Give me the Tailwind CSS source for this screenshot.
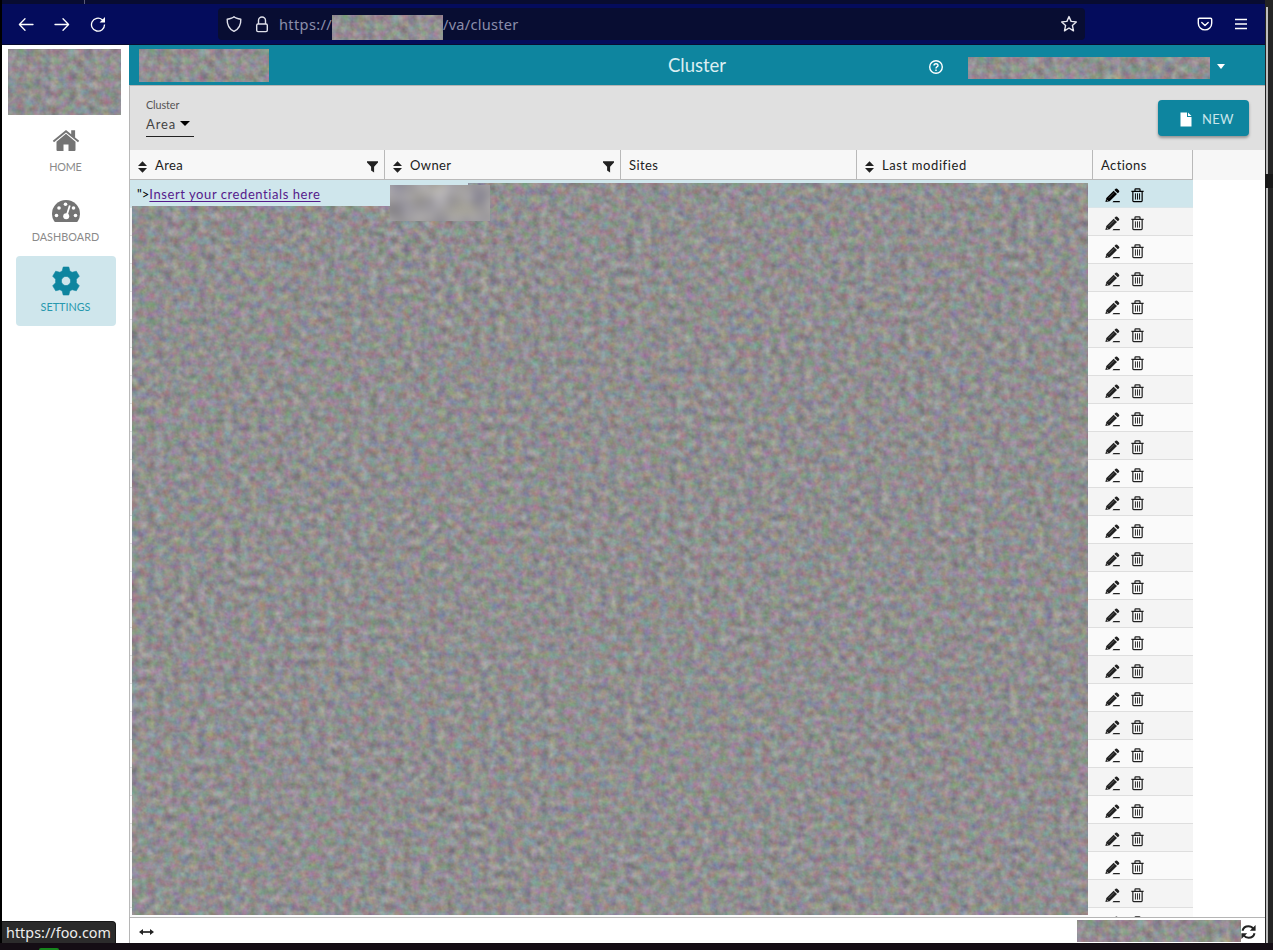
<!DOCTYPE html>
<html lang="en">
<head>
<meta charset="utf-8">
<title>Cluster</title>
<script src="https://cdn.jsdelivr.net/npm/@tailwindcss/browser@4"></script>
</head>
<body class="h-[950px] w-[1273px] overflow-hidden bg-[#140d14] font-['Lato','Noto_Sans',sans-serif] text-[#212121]">
<svg class="hidden">
  <symbol id="pencil" viewBox="0 0 16 16"><path fill="currentColor" d="M.4 15 1.4 10.6 9.2 2.8 12.8 6.4 5 14.2ZM10 2 11.3.8Q12.2 0 13 .8L14.9 2.7Q15.7 3.6 14.9 4.4L13.6 5.6ZM9 13.9H15.8V15.1H8Z"/><path d="M3.7 10.9 9.8 4.8" stroke="#fff" stroke-opacity=".4" stroke-width=".7"/><path d="M1.8 12.5 2.9 13.6" stroke="#fff" stroke-width=".7"/></symbol>
  <symbol id="trash" viewBox="0 0 14 16"><path fill="none" stroke="currentColor" stroke-width="1.3" d="M.4 3.5H13.6M4.3 3.3V1.6Q4.3.9 5 .9H9Q9.7.9 9.7 1.6V3.3M2 3.5V13.7Q2 14.6 2.9 14.6H11.1Q12 14.6 12 13.7V3.5"/><path stroke="currentColor" stroke-width="1" d="M4.8 5.7V12.4M7 5.7V12.4M9.2 5.7V12.4"/></symbol>
  <symbol id="sort" viewBox="0 0 10 12"><path fill="currentColor" d="M5.5.3 10 5H1ZM5.5 11.7 1 7H10Z"/></symbol>
  <symbol id="funnel" viewBox="0 0 12 12"><path fill="currentColor" d="M0 .3H11V1.4L7.1 5.8V11.6L4.1 9.4V5.8L0 1.4Z"/></symbol>
  <filter id="noise" x="0" y="0" width="100%" height="100%" color-interpolation-filters="sRGB">
    <feTurbulence type="fractalNoise" baseFrequency="0.117 0.123" numOctaves="3" seed="23"/>
    <feColorMatrix values=".30 .04 .04 0 .375  .04 .30 .04 0 .37  .04 .04 .30 0 .375  0 0 0 0 1"/>
  </filter>
  <filter id="haze" x="0" y="0" width="100%" height="100%" color-interpolation-filters="sRGB">
    <feTurbulence type="fractalNoise" baseFrequency="0.05" numOctaves="1" seed="4"/>
    <feColorMatrix values=".25 .1 0 0 .45  .25 .1 0 0 .44  .25 0 .1 0 .45  0 0 0 0 1"/>
  </filter>
</svg>

<div class="relative flex h-[943px]">
  <div class="w-[2px] shrink-0 bg-black"></div>
  <div class="flex w-[1263px] flex-col bg-white">
    <!-- Browser toolbar -->
    <div class="h-1 shrink-0 bg-[#080c30]"><div class="ml-[82px] h-1 w-px bg-[#5a5c78]"></div></div>
    <div class="flex h-[41px] shrink-0 items-center border-b border-[#080c30] bg-[#040c5c]">
      <svg class="ml-4 h-4 w-4" viewBox="0 0 16 16" fill="none" stroke="#fff" stroke-width="1.3" stroke-linecap="round" stroke-linejoin="round"><path d="M15 8.5H1.5M7 2.8 1.4 8.5 7 14.2"/></svg>
      <svg class="ml-5 h-4 w-4" viewBox="0 0 16 16" fill="none" stroke="#fff" stroke-width="1.3" stroke-linecap="round" stroke-linejoin="round"><path d="M1 8.5H14.5M9 2.8 14.6 8.5 9 14.2"/></svg>
      <svg class="ml-5 h-4 w-4" viewBox="0 0 16 16" fill="none" stroke="#fff" stroke-width="1.3"><path d="M14.5 8.5A6.5 6.5 0 1 1 12.2 3.7L13 4.5"/><path fill="#fff" stroke="none" d="M15 1V6.4H9.6Z"/></svg>
      <div class="ml-[112px] flex h-8 w-[867px] items-center rounded bg-[#080d32]">
        <svg class="ml-[7px] h-[18px] w-[18px]" viewBox="0 0 18 18" fill="none" stroke="#dfe0ea" stroke-width="1.4" stroke-linejoin="round"><path d="M9 1.7Q10.6 3.3 15.8 4.2 16.2 12.8 9 16.4 1.8 12.8 2.2 4.2 7.4 3.3 9 1.7Z"/></svg>
        <svg class="ml-[12px] h-[17px] w-[14px]" viewBox="0 0 14 17" fill="none" stroke="#dfe0ea" stroke-width="1.4"><rect x="1.7" y="8" width="10.6" height="7.6" rx="1.3"/><path d="M3.5 8V4.5A3.5 3.5 0 0 1 10.5 4.5V8"/></svg>
        <span class="mt-[2px] ml-[10px] w-[53px] whitespace-nowrap font-['Noto_Sans',sans-serif] text-[14.6px] tracking-[0.35px] text-[#8b8daa]">https://</span>
        <svg class="mt-[7px] h-[25px] w-[111px]"><rect width="111" height="25" filter="url(#noise)"/></svg>
        <span class="mt-[2px] font-['Noto_Sans',sans-serif] text-[14.6px] tracking-[0.25px] text-[#8b8daa]">/va/cluster</span>
        <svg class="ml-auto mr-[7px] h-[18px] w-[18px]" viewBox="0 0 18 18" fill="none" stroke="#e8e8f0" stroke-width="1.4" stroke-linejoin="round"><path d="M9 1.6 11.1 6.4 16.3 6.9 12.4 10.4 13.5 15.8 9 13 4.5 15.8 5.6 10.4 1.7 6.9 6.9 6.4Z"/></svg>
      </div>
      <svg class="ml-[112px] h-4 w-4" viewBox="0 0 16 16" fill="none" stroke="#fff" stroke-width="1.4" stroke-linecap="round" stroke-linejoin="round"><path d="M2.4 2.3H13.6Q14.7 2.3 14.7 3.4V7.2A6.7 6.7 0 0 1 1.3 7.2V3.4Q1.3 2.3 2.4 2.3ZM4.8 6.4 8 9.4 11.2 6.4"/></svg>
      <svg class="ml-[22px] h-3 w-3" viewBox="0 0 12 12" stroke="#fff" stroke-width="1.4"><path d="M0 1.5H12M0 6H12M0 10.5H12"/></svg>
    </div>

    <div class="flex min-h-0 flex-1">
      <!-- Sidebar -->
      <nav class="relative flex w-[127px] shrink-0 flex-col items-center pt-1">
        <svg class="mr-[3px] h-[66px] w-[113px] shrink-0"><rect width="113" height="66" filter="url(#noise)"/></svg>
        <a class="mt-[1px] flex h-[70px] w-[100px] flex-col items-center pt-3">
          <svg class="h-[24px] w-[28px]" viewBox="0 0 28 24" fill="#747474"><path d="M14 5.8 23.5 13.7V22Q23.5 23 22.5 23H16.5V16.5H11.5V23H5.5Q4.5 23 4.5 22V13.7Z"/><path d="M.8 12.8 14 2 19.2 6.3V2.3H23.1V9.5L27.2 12.8 26 14.3 14 4.4 2 14.3Z"/></svg>
          <span class="mt-[7px] text-[10.8px] leading-4 tracking-[-0.2px] text-[#8a8a8a]">HOME</span>
        </a>
        <a class="flex h-[70px] w-[100px] flex-col items-center pt-3">
          <svg class="h-6 w-[30px]" viewBox="0 0 30 24"><path fill="#747474" d="M15 2A14 14 0 0 0 1 16Q1 20.3 3.2 23.2L4 24H26L26.8 23.2Q29 20.3 29 16A14 14 0 0 0 15 2Z"/><g fill="#fff"><circle cx="5.5" cy="17.5" r="1.8"/><circle cx="8" cy="10" r="1.8"/><circle cx="14.5" cy="6.3" r="1.8"/><circle cx="24.5" cy="17.5" r="1.8"/><circle cx="22.5" cy="10" r="1.8"/><circle cx="15.2" cy="18.3" r="3"/></g><path d="M15.5 18 18.8 7.5" stroke="#fff" stroke-width="1.8"/></svg>
          <span class="mt-[7px] text-[10.8px] leading-4 tracking-[0.05px] text-[#8a8a8a]">DASHBOARD</span>
        </a>
        <a class="flex h-[70px] w-[100px] flex-col items-center rounded bg-[#cfe6ec] pt-[10px]">
          <svg class="h-[30px] w-[30px]" viewBox="0 0 30 30"><path fill="#0e859f" fill-rule="evenodd" d="M12.2 1H17.8L18.8 5 21.1 6.3 25.3 5.2 28.3 10.2 25.4 13.2V16.8L28.3 19.8 25.3 24.8 21.1 23.7 18.8 25 17.8 29H12.2L11.2 25 8.9 23.7 4.7 24.8 1.7 19.8 4.6 16.8V13.2L1.7 10.2 4.7 5.2 8.9 6.3 11.2 5ZM15 10.4A4.6 4.6 0 1 0 15 19.6 4.6 4.6 0 1 0 15 10.4Z" stroke="#0e859f" stroke-width=".6" stroke-linejoin="round"/></svg>
          <span class="mt-[3px] text-[10.8px] leading-4 text-[#2798ae]">SETTINGS</span>
        </a>
        <div class="absolute bottom-0 left-0 flex h-[22px] w-[114px] items-center rounded-tr border-t border-r border-[#171717] bg-[#2b2b2b] pl-1 font-['Noto_Sans',sans-serif] text-[14.3px] tracking-[0.05px] text-[#eee]">https://foo.com</div>
      </nav>

      <main class="flex min-w-0 flex-1 flex-col">
        <header class="grid h-10 shrink-0 grid-cols-[1fr_auto_1fr] bg-[#0e859f]">
          <svg class="mt-1 ml-[10px] h-[33px] w-[130px]"><rect width="130" height="33" filter="url(#noise)"/></svg>
          <h1 class="pt-[7px] text-[18.5px] leading-[27px] tracking-[0px] text-[#dbeef2]">Cluster</h1>
          <div class="flex items-center justify-end pt-[3px] pr-[40px]">
            <svg class="h-4 w-4" viewBox="0 0 16 16" fill="none" stroke="#fff" stroke-width="1.4"><circle cx="8" cy="8" r="6.3"/><path d="M6 6.5Q6 4.7 8 4.7T10 6.5Q10 7.4 8.9 7.9 8 8.4 8 9.5M8 10.5V12"/></svg>
            <svg class="mt-[2px] ml-6 h-[22px] w-[242px]"><rect width="242" height="22" filter="url(#noise)"/></svg>
            <svg class="ml-[7px] h-[5px] w-2" viewBox="0 0 8 5"><path fill="#fff" d="M0 0H8L4 5Z"/></svg>
          </div>
        </header>
        <section class="flex h-[65px] shrink-0 justify-between border-t border-l border-[#b5b5b5] bg-[#e0e0e0] pt-[14px] pr-4 pl-4">
          <div class="flex flex-col">
            <div class="h-4 text-[10.8px] leading-[9px] tracking-[-0.1px] text-[#555]">Cluster</div>
            <div class="flex h-[21px] w-12 items-center border-b border-[#222] text-[13px] tracking-[0.9px] text-[#444]"><span class="-mt-[2px]">Area</span><svg class="ml-1 -mt-[5px] h-[5px] w-[10px] shrink-0" viewBox="0 0 10 5"><path d="M0 0H10L5 5Z"/></svg></div>
          </div>
          <button class="flex h-9 w-[91px] items-center rounded bg-[#0e859f] pl-[22px] text-[13px] text-[#c9e5eb] shadow-[0_2px_3px_rgba(0,0,0,.35)]">
            <svg class="mt-[3px] h-[15px] w-3" viewBox="0 0 12 15" fill="#fff"><path d="M.5.5H7V5H11.5V14.5H.5ZM8 .5 11.5 4H8Z"/></svg>
            <span class="ml-[10px] mt-[3px] tracking-[0.3px]">NEW</span>
          </button>
        </section>
        <div class="flex h-[30px] shrink-0 bg-[#f7f7f7] text-[13px] tracking-[0.4px]">
          <div class="flex w-64 items-center border-x border-b border-[#b9b9b9] pt-[2px] pr-[5px] pl-[7px]"><svg class="mt-[2px] mr-2 h-3 w-[10px]"><use href="#sort"/></svg>Area<svg class="mt-[3px] ml-auto h-3 w-3"><use href="#funnel"/></svg></div>
          <div class="flex w-[236px] items-center border-r border-b border-[#b9b9b9] pt-[2px] pr-[5px] pl-[7px]"><svg class="mt-[2px] mr-2 h-3 w-[10px]"><use href="#sort"/></svg>Owner<svg class="mt-[3px] ml-auto h-3 w-3"><use href="#funnel"/></svg></div>
          <div class="flex w-[236px] items-center border-r border-b border-[#b9b9b9] pt-[2px] pl-2">Sites</div>
          <div class="flex w-[236px] items-center border-r border-b border-[#b9b9b9] pt-[2px] pl-[7px]"><svg class="mt-[2px] mr-2 h-3 w-[10px]"><use href="#sort"/></svg><span class="tracking-[0.6px]">Last modified</span></div>
          <div class="flex w-[100px] items-center border-r border-b border-[#b9b9b9] pt-[2px] pl-2">Actions</div>
        </div>
        <div class="relative h-[737px] shrink-0 overflow-hidden border-l border-[#b9b9b9]">
          <div id="rows" class="w-[1063px]"></div>
          <svg class="absolute top-0 left-0 h-[736px] w-[960px]">
            <rect x="2" y="26" width="956" height="709" filter="url(#noise)"/>
            <rect x="338" y="3" width="620" height="38" filter="url(#noise)"/>
            <rect x="260" y="5" width="100" height="36" filter="url(#haze)"/>
          </svg>
        </div>
        <footer class="flex flex-1 items-center justify-end border-t border-l border-[#b5b5b5] pr-[9px] pl-[9px]">
          <svg class="mt-[2px] mr-auto h-2 w-[15px]" viewBox="0 0 15 8"><path d="M3 4H12" stroke="#222" stroke-width="1.7"/><path fill="#222" d="M0 4 4 .9V7.1ZM15 4 11 .9V7.1Z"/></svg>
          <svg class="h-[22px] w-[164px]"><rect width="164" height="22" filter="url(#noise)"/></svg>
          <svg class="mt-[2px] h-4 w-[15px]" viewBox="0 0 15 16" fill="none" stroke="#222" stroke-width="2"><path d="M1.5 6.8Q2.5 2.2 7.5 2.2 10.5 2.2 12.6 5M13.5 9.2Q12.5 13.8 7.5 13.8 4.5 13.8 2.4 11"/><path fill="#222" stroke="none" d="M14.6 1V6.8H8.8ZM.4 15V9.2H6.2Z"/></svg>
        </footer>
      </main>
    </div>
  </div>
  <!-- Scroll track and window edge -->
  <div class="flex w-2 flex-col bg-[#242424]">
    <div class="mt-[7px] h-[167px] w-[3px] border-l border-[#222] bg-[#bdbdbd]"></div>
    <div class="h-[14px] bg-[#181818]"></div>
    <div class="w-[3px] flex-1 border-l border-[#222] bg-[#bdbdbd]"></div>
  </div>
</div>
<div class="flex h-[7px] items-start overflow-hidden"><div class="mt-[5px] ml-[39px] h-[2px] w-[20px] rounded-t-full bg-[#16851c]"></div></div>

<template id="row">
  <div class="flex h-7 items-center border-b border-[#dedede] pt-[2px] pr-[49px] pl-[7px] text-[13px] odd:bg-[#fafafa] even:bg-[#f4f4f4] first:border-[#d9e5e9]! first:bg-[#cfe6ec]! first:text-black">
    <span class="label whitespace-nowrap"></span>
    <svg class="mt-[2px] ml-auto h-[15px] w-[15px]"><use href="#pencil"/></svg>
    <svg class="mt-[2px] ml-[11px] h-[15px] w-[13px]"><use href="#trash"/></svg>
  </div>
</template>
<script>
  const rows = document.getElementById('rows');
  const tpl = document.getElementById('row');
  for (let i = 0; i < 27; i++) rows.appendChild(tpl.content.cloneNode(true));
  rows.querySelector('.label').innerHTML = '"&gt;<a class="tracking-[0.57px] text-[#551a8b] underline underline-offset-2" href="https://foo.com">Insert your credentials here</a>';
</script>
</body>
</html>
